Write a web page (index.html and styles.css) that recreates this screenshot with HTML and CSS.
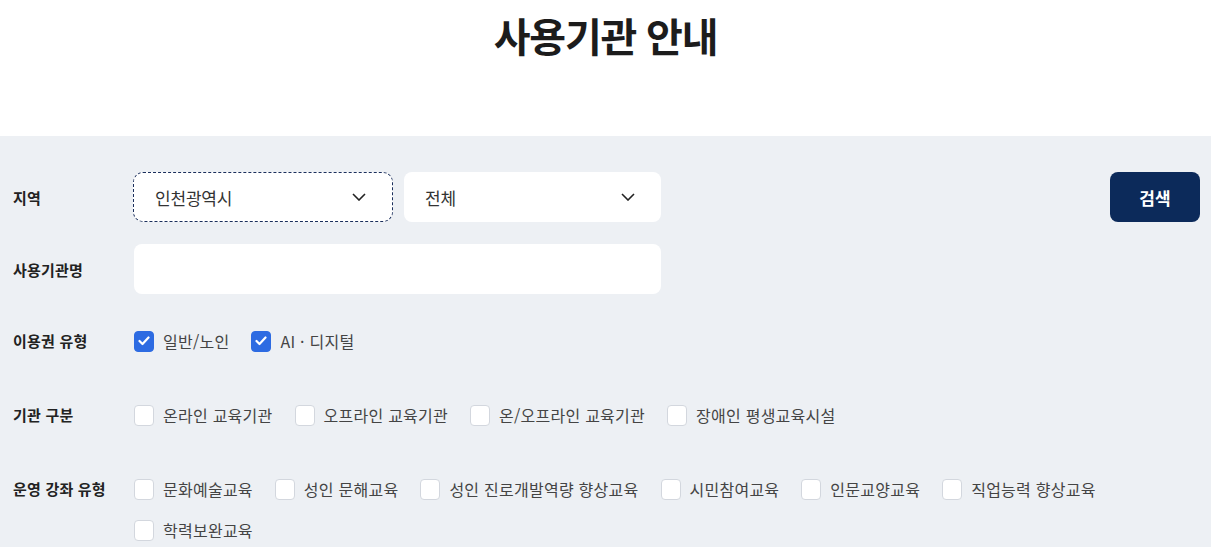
FILE: index.html
```html
<!DOCTYPE html>
<html lang="ko">
<head>
  <meta charset="UTF-8">
  <meta name="viewport" content="width=device-width, initial-scale=1.0">
  <title>사용기관 안내</title>
  <link rel="stylesheet" href="styles.css">
</head>
<body>
  <div class="page-head">
    <h1 class="page-title">사용기관 안내</h1>
  </div>

  <form class="search-box">
    <div class="row">
      <span class="row-label">지역</span>
      <div class="select select-focus">
        <span>인천광역시</span>
        <svg class="chevron" width="14" height="8" viewBox="0 0 14 8"><path d="M1 1l6 6 6-6" fill="none" stroke="#222" stroke-width="1.6"/></svg>
      </div>
      <div class="select">
        <span>전체</span>
        <svg class="chevron" width="14" height="8" viewBox="0 0 14 8"><path d="M1 1l6 6 6-6" fill="none" stroke="#222" stroke-width="1.6"/></svg>
      </div>
      <button type="button" class="btn-search">검색</button>
    </div>

    <div class="row">
      <span class="row-label">사용기관명</span>
      <input type="text" class="text-input">
    </div>

    <div class="row check-row">
      <span class="row-label">이용권 유형</span>
      <div class="options">
        <label class="option"><span class="box checked"><svg width="12" height="10" viewBox="0 0 12 10"><path d="M1.5 5l3 3 6-6.5" fill="none" stroke="#fff" stroke-width="2.2" stroke-linecap="round" stroke-linejoin="round"/></svg></span>일반/노인</label>
        <label class="option"><span class="box checked"><svg width="12" height="10" viewBox="0 0 12 10"><path d="M1.5 5l3 3 6-6.5" fill="none" stroke="#fff" stroke-width="2.2" stroke-linecap="round" stroke-linejoin="round"/></svg></span>AI · 디지털</label>
      </div>
    </div>

    <div class="row check-row">
      <span class="row-label">기관 구분</span>
      <div class="options">
        <label class="option"><span class="box"></span>온라인 교육기관</label>
        <label class="option"><span class="box"></span>오프라인 교육기관</label>
        <label class="option"><span class="box"></span>온/오프라인 교육기관</label>
        <label class="option"><span class="box"></span>장애인 평생교육시설</label>
      </div>
    </div>

    <div class="row check-row">
      <span class="row-label">운영 강좌 유형</span>
      <div class="options">
        <label class="option"><span class="box"></span>문화예술교육</label>
        <label class="option"><span class="box"></span>성인 문해교육</label>
        <label class="option"><span class="box"></span>성인 진로개발역량 향상교육</label>
        <label class="option"><span class="box"></span>시민참여교육</label>
        <label class="option"><span class="box"></span>인문교양교육</label>
        <label class="option"><span class="box"></span>직업능력 향상교육</label>
        <label class="option"><span class="box"></span>학력보완교육</label>
      </div>
    </div>
  </form>
</body>
</html>
```

FILE: styles.css
```css
body {
  margin: 0;
  font-family: "Noto Sans CJK KR", "Noto Sans", sans-serif;
  color: #222;
  background: #fff;
}
.page-head {
  height: 136px;
  text-align: center;
}
.page-title {
  margin: 0;
  padding-top: 6px;
  font-size: 40px;
  font-weight: 700;
  letter-spacing: -1.2px;
  color: #1c1c1c;
}
.search-box {
  background: #edf0f4;
  padding: 36px 11px 20px 13px;
  min-height: 355px;
}
.row {
  display: flex;
  align-items: center;
  min-height: 50px;
}
.row + .row {
  margin-top: 22px;
}
.row-label {
  width: 120px;
  flex-shrink: 0;
  font-size: 15px;
  font-weight: 700;
  color: #222;
  letter-spacing: 0.2px;
}
.select {
  box-sizing: border-box;
  width: 257px;
  height: 50px;
  background: #fff;
  border-radius: 8px;
  display: flex;
  align-items: center;
  justify-content: space-between;
  padding: 0 26px 0 21px;
  font-size: 17px;
  letter-spacing: -0.2px;
  color: #333;
  margin-right: 12px;
}
.select-focus {
  width: 260px;
  border: 1px dashed #1b2f5c;
  border-radius: 10px;
  margin-right: 11px;
}
.btn-search {
  margin-left: auto;
  width: 90px;
  height: 50px;
  border: none;
  border-radius: 8px;
  background: #0c2a5a;
  color: #fff;
  font-family: inherit;
  font-size: 17px;
  font-weight: 700;
  cursor: pointer;
}
.text-input {
  box-sizing: border-box;
  width: 527px;
  height: 50px;
  border: none;
  border-radius: 8px;
  background: #fff;
  margin-left: 1px;
}
.check-row {
  align-items: flex-start;
  padding-top: 14px;
  min-height: 36px;
}
.check-row + .check-row {
  margin-top: 24px;
}
.check-row .row-label {
  line-height: 22px;
}
.options {
  display: flex;
  flex-wrap: wrap;
  column-gap: 22px;
  row-gap: 19px;
  margin-left: 1px;
}
.option {
  display: flex;
  align-items: center;
  height: 22px;
  font-size: 16px;
  letter-spacing: 0.25px;
  color: #444;
  cursor: pointer;
}
.box {
  box-sizing: border-box;
  width: 20px;
  height: 21px;
  border: 1px solid #d3d7de;
  border-radius: 4px;
  background: #fff;
  margin-right: 9px;
  display: flex;
  align-items: center;
  justify-content: center;
}
.box.checked {
  background: #2d6be2;
  border-color: #2d6be2;
}
```
